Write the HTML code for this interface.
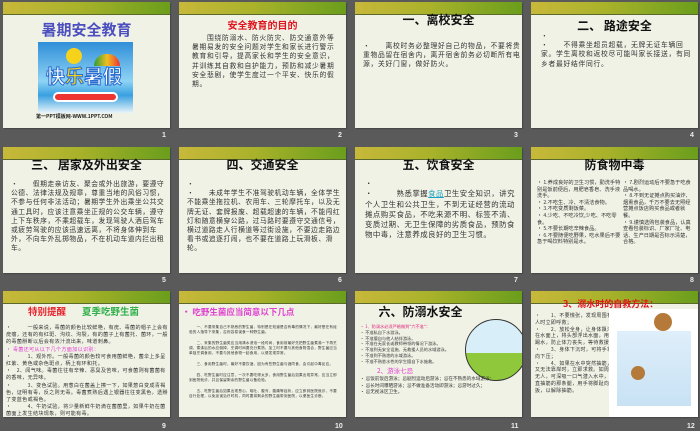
<!DOCTYPE html>
<html><head><meta charset="utf-8"><style>
*{margin:0;padding:0;box-sizing:border-box}
body{width:700px;height:431px;background:#5a5a5a;position:relative;overflow:hidden;font-family:"Liberation Sans","Noto Sans CJK SC",sans-serif}
.s{position:absolute;width:167px;height:126px;background:#f1f2e6;overflow:hidden;box-shadow:1px 1px 1px #444}
.h{position:absolute;left:0;top:0;width:100%;height:13px;background:linear-gradient(90deg,#c8b83a 0%,#a9b22a 45%,#6a9e1c 100%);border-bottom:1px solid #5b6a2a}
.n{position:absolute;color:#eee;font-size:7px;font-weight:bold}
.t{position:absolute;left:0;width:100%;text-align:center;font-weight:bold;color:#111;font-size:12px;font-family:"Noto Sans CJK SC",sans-serif}
.p{position:absolute;font-size:6.8px;line-height:9.2px;letter-spacing:.7px;color:#333;font-family:"Noto Sans CJK SC",sans-serif}
</style></head><body>

<!-- row 1 -->
<div class="s" style="left:3px;top:2px"><div class="h"></div>
<div class="t" style="top:17px;font-size:15px;color:#4b4fc0">暑期安全教育</div>
<div style="position:absolute;left:35px;top:40px;width:95px;height:71px;background:linear-gradient(#2f8fd8,#8fd3f5 55%,#3aa0e0 75%,#e8f4fa)">
<div style="position:absolute;left:28px;top:6px;width:16px;height:16px;border-radius:50%;background:#f7d21c"></div>
<div style="position:absolute;left:56px;top:12px;width:26px;height:12px;border-radius:12px 12px 0 0;background:linear-gradient(90deg,#2a9e3a,#f0c020,#e33)"></div>
<div style="position:absolute;left:8px;top:20px;font-size:19px;font-weight:bold;color:#fff;-webkit-text-stroke:1px #2a6ed0;font-family:'Noto Sans CJK SC'">快<span style="color:#f7d21c">乐</span>暑假</div>
<div style="position:absolute;left:15px;top:50px;width:65px;height:10px;border-radius:5px;background:#e33;border:2px solid #fff"></div>
</div>
<div class="p" style="left:33px;top:110px;font-size:5px;letter-spacing:0;font-weight:bold;color:#222">第一PPT模板网-WWW.1PPT.COM</div>
</div>
<div class="n" style="left:162px;top:132px">1</div>

<div class="s" style="left:179px;top:2px"><div class="h"></div>
<div class="t" style="top:15px;color:#e0141e;font-size:10px">安全教育的目的</div>
<div class="p" style="left:13px;top:31px;width:146px">&emsp;&emsp;围绕防溺水、防火防灾、防交通意外等暑期易发的安全问题对学生和家长进行警示教育和引导，提高家长和学生的安全意识，并训练其自救和自护能力，预防和减少暑期安全悲剧，使学生度过一个平安、快乐的假期。</div>
</div>
<div class="n" style="left:338px;top:132px">2</div>

<div class="s" style="left:355px;top:2px"><div class="h"></div>
<div class="t" style="top:9px">一、离校安全</div>
<div class="p" style="left:8px;top:39px;width:158px">•&emsp;&emsp;离校时务必整理好自己的物品，不要将贵重物品留在宿舍内，离开宿舍前务必切断所有电源，关好门窗，做好防火。</div>
</div>
<div class="n" style="left:514px;top:132px">3</div>

<div class="s" style="left:531px;top:2px"><div class="h"></div>
<div class="t" style="top:15px">二、 路途安全</div>
<div class="p" style="left:10px;top:29px;width:156px">•<br>•&emsp;&emsp;不得乘坐超员超载，无牌无证车辆回家。学生离校和返校尽可能叫家长接送，有同乡者最好结伴同行。</div>
</div>
<div class="n" style="left:690px;top:132px">4</div>

<!-- row 2 -->
<div class="s" style="left:3px;top:147px"><div class="h"></div>
<div class="t" style="top:9px">三、 居家及外出安全</div>
<div class="p" style="left:8px;top:32px;width:158px;letter-spacing:.5px">•&emsp;&emsp;假期走亲访友、聚会或外出旅游，要遵守公德、法律法规及规章，尊重当地的风俗习惯，不参与任何非法活动；暑期学生外出乘坐公共交通工具时，应该注意乘坐正规的公交车辆，遵守上下车秩序，不乘超载车，发现驾驶人酒后驾车或疲劳驾驶的应该迅速远离，不将身体伸到车外，不向车外乱掷物品，不在机动车道内拦出租车。</div>
</div>
<div class="n" style="left:162px;top:277px">5</div>

<div class="s" style="left:179px;top:147px"><div class="h"></div>
<div class="t" style="top:9px">四、交通安全</div>
<div class="p" style="left:8px;top:32px;width:158px;letter-spacing:.5px">•<br>•&emsp;&emsp;未成年学生不准驾驶机动车辆，全体学生不能乘坐拖拉机、农用车、三轮摩托车，以及无牌无证、套牌报废、超载超速的车辆，不能闯红灯和随意横穿公路，过马路时要遵守交通信号，横过道路走人行横道等过街设施，不要边走路边看书或追逐打闹，也不要在道路上玩滑板、滑轮。</div>
</div>
<div class="n" style="left:338px;top:277px">6</div>

<div class="s" style="left:355px;top:147px"><div class="h"></div>
<div class="t" style="top:9px">五、饮食安全</div>
<div class="p" style="left:10px;top:32px;width:155px;font-size:7.4px;line-height:10.3px;letter-spacing:.5px">•<br>•&emsp;&emsp;&emsp;熟悉掌握<span style="color:#1aa0c0;text-decoration:underline">食品</span>卫生安全知识，讲究个人卫生和公共卫生，不到无证经营的流动摊点购买食品，不吃来源不明、标签不清、变质过期、无卫生保障的劣质食品，预防食物中毒，注意养成良好的卫生习惯。</div>
</div>
<div class="n" style="left:514px;top:277px">7</div>

<div class="s" style="left:531px;top:147px"><div class="h"></div>
<div class="t" style="top:9px">防食物中毒</div>
<div class="p" style="left:6px;top:33px;width:84px;font-size:5.2px;line-height:6.6px;letter-spacing:0">• 1.养成良好的卫生习惯，勤洗手特别是饭前便后，用肥皂香皂、洗手液洗手。<br>• 2.不吃生、冷、不清洁食物。<br>• 3.不吃变质剩饭菜。<br>• 4.少吃、不吃冷饮,少吃、不吃零食。<br>• 5.不要长期吃辛辣食品。<br>• 6.不要随便吃野果，吃水果后不要急于喝饮料特别是水。</div>
<div class="p" style="left:92px;top:33px;width:72px;font-size:5.2px;line-height:6.6px;letter-spacing:0">• 7.剧烈运动后不要急于吃食品喝水。<br>• 8.不到无证摊点购买油炸、烟熏食品，千万不要去无照经营摊点饭店购买食品或者就餐。<br>• 9.谨慎选购包装食品，认真查看包装标识、厂家厂址、电话、生产日期是否标示清楚，合格。</div>
</div>
<div class="n" style="left:690px;top:277px">8</div>

<!-- row 3 -->
<div class="s" style="left:3px;top:291px"><div class="h"></div>
<div class="t" style="top:13px;text-align:left;left:25px;color:#e8202a;font-size:9.5px">特别提醒<span style="color:#2fb04a;margin-left:16px">夏季吃野生菌</span></div>
<div class="p" style="left:3px;top:33px;width:162px;font-size:5.1px;line-height:7.2px;letter-spacing:.3px">•&emsp;&emsp;&emsp;一般来说，毒菌的颜色比较鲜艳，有疣、毒菌的帽子上会有疣瘤，还有的有红斑、沟纹、沟裂，有的菌子上有菌托、菌环，一般的毒菌掰断以后会有浓汁流出来，味道刺鼻。<br><span style="color:#e040d0">• 毒菌还可从以下几个方面加以识别：</span><br>•&emsp;&emsp;&emsp;1、观外形。一般毒菌的颜色较可食用菌鲜艳，菌伞上多呈红紫、黄色或杂色斑点，柄上有环和托。<br>•&emsp;2、闻气味。毒菌往往有辛辣、恶臭及苦味，可食菌则有菌菌有的香味，无异味。<br>•&emsp;&emsp;&emsp;3、变色试验。用葱白在菌盖上擦一下，如果葱白变成青褐色，证明有毒，反之则无毒。毒菌煮熟后遇上银器往往变黑色，透掰了变蓝色或褐色。<br>•&emsp;&emsp;&emsp;4、牛奶试验。将少量新鲜牛奶滴在菌菌里，如果牛奶在菌菌面上发生结块现象，则可能有毒。</div>
</div>
<div class="n" style="left:162px;top:423px">9</div>

<div class="s" style="left:179px;top:291px"><div class="h"></div>
<div class="t" style="top:15px;text-align:left;left:3px;color:#e040d0;font-size:8.5px">• 吃野生菌应当简意以下几点</div>
<div class="p" style="left:10px;top:34px;width:150px;font-size:3.6px;line-height:5.3px;letter-spacing:.2px">&emsp;&emsp;一、不要采集自己不熟悉的野生菌，特别是在知道是否有毒的情况下，最好是在有经验的人指导下采集，否则容易误食一种野生菌。<br><br>&emsp;&emsp;二、采集的野生菌类应当用清水浸泡一段时间，食用前最好先把野生菌煮沸一下再烹调，煮沸后的水应倒掉，烹调时间要充分煮熟，加工时不要与其他食物混合，野生菌应当单独烹调食用，不要与其他食物一起食用，以便发现异常。<br><br>&emsp;&emsp;三、食用野生菌时，最好不要饮酒，因为有些野生菌与酒同食，会引起中毒反应。<br><br>&emsp;&emsp;四、吃野生菌时应注意，一次不要吃得太多，食用野生菌后如果出现异常，应当立即到医院就诊，并且保留剩余的野生菌以备检验。<br><br>&emsp;&emsp;五、吃野生菌后如果出现恶心、呕吐、腹泻、腹痛等症状，应立即到医院就诊，不要自行处理，以免延误治疗时机，同时要将剩余的野生菌带到医院，以便医生诊断。</div>
</div>
<div class="n" style="left:335px;top:423px">10</div>

<div class="s" style="left:355px;top:291px"><div class="h"></div>
<div class="t" style="top:12px;left:-18px;font-size:12px">六、防溺水安全</div>
<div style="position:absolute;left:110px;top:28px;width:62px;height:62px;border-radius:50%;background:linear-gradient(#d8eef8 55%,#8fc83a 55%);border:1.5px solid #333"></div>
<div class="p" style="left:5px;top:34px;width:110px;font-size:4.2px;line-height:5.8px;letter-spacing:0"><span style="color:#e0207a">• 1、防溺水必须严格做到"六不准"：</span><br>• 不准私自下水游泳。<br>• 不准擅自与他人结伴游泳。<br>• 不准在无家长或教师带领的情况下游泳。<br>• 不准到无安全设施、无救援人员的水域游泳。<br>• 不准到不熟悉的水域游泳。<br>• 不准不熟悉水性的学生擅自下水施救。</div>
<div class="p" style="left:22px;top:75px;color:#e040d0;font-size:6.5px;letter-spacing:0">2、游泳七忌</div>
<div class="p" style="left:5px;top:85px;width:160px;font-size:4.6px;line-height:6.6px;letter-spacing:0">• 忌饭前饭后游泳；忌剧烈运动后游泳；忌在不熟悉的水域游泳；<br>• 忌长时间曝晒游泳；忌不做准备活动即游泳；忌游时过久；<br>• 忌无视泳区卫生。</div>
</div>
<div class="n" style="left:511px;top:423px">11</div>

<div class="s" style="left:531px;top:291px"><div class="h"></div>
<div class="t" style="top:6px;left:32px;text-align:left;color:#e0141e;font-size:9px">3、溺水时的自救方法：</div>
<div class="p" style="left:4px;top:22px;width:80px;font-size:5px;line-height:6.8px;letter-spacing:.3px">•&emsp;&emsp;1、不要慌张，发现周围有人时立即呼救；<br>•&emsp;&emsp;2、放松全身，让身体飘浮在水面上，将头部浮出水面，用脚踢水，防止体力丧失，等待救援；<br>•&emsp;&emsp;3、身体下沉时，可将手掌向下压；<br>•&emsp;&emsp;4、如果在水中突然抽筋，又无法靠岸时，立即求救。如周围无人，可深吸一口气潜入水中，伸直抽筋的那条腿，用手将脚趾向上扳，以解除抽筋。</div>
<div style="position:absolute;left:78px;top:18px;width:89px;height:108px;background:#fff">
<div style="position:absolute;left:8px;top:22px;width:74px;height:75px;background:linear-gradient(#dfeefa,#c8e2f4)"></div>
<div style="position:absolute;left:45px;top:4px;width:18px;height:18px;border-radius:50%;background:#b57a3a"></div>
<div style="position:absolute;left:22px;top:57px;width:14px;height:14px;border-radius:50%;background:#b57a3a"></div>
</div>
</div>
<div class="n" style="left:687px;top:423px">12</div>

</body></html>
